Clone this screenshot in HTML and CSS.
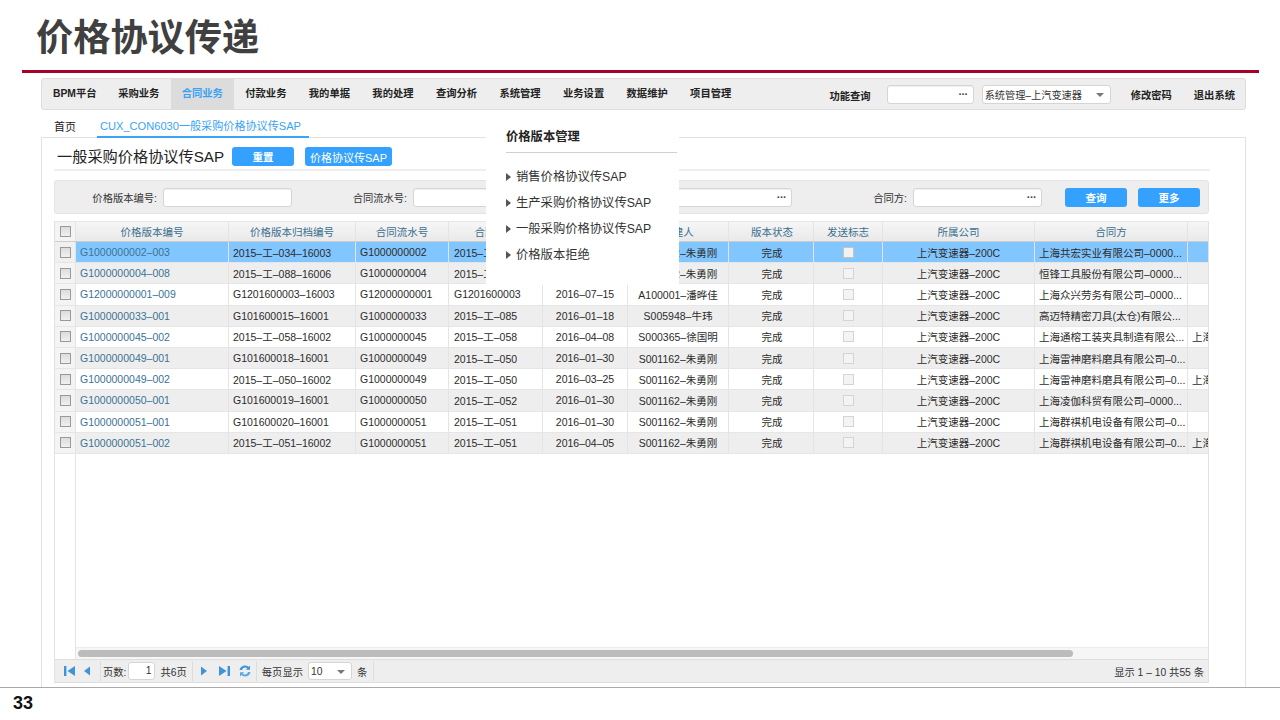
FILE: index.html
```html
<!DOCTYPE html>
<html lang="zh">
<head>
<meta charset="utf-8">
<title>价格协议传递</title>
<link rel="stylesheet" href="styles.css">
</head>
<body>
<div class="slide">
  <header class="slide-head"><h1>价格协议传递</h1></header>
  <div class="rule"></div>
  <main class="stage">
    <nav class="topnav">
      <span class="nav-item first">BPM平台</span>
      <span class="nav-item">采购业务</span>
      <span class="nav-item active">合同业务</span>
      <span class="nav-item">付款业务</span>
      <span class="nav-item">我的单据</span>
      <span class="nav-item">我的处理</span>
      <span class="nav-item">查询分析</span>
      <span class="nav-item">系统管理</span>
      <span class="nav-item">业务设置</span>
      <span class="nav-item">数据维护</span>
      <span class="nav-item">项目管理</span>
      <span class="nav-spacer"></span>
      <span class="nav-label">功能查询</span>
      <span class="lookup nav-lookup"><i>...</i></span>
      <span class="select nav-select">系统管理–上汽变速器<b class="caret"></b></span>
      <span class="nav-link">修改密码</span>
      <span class="nav-link">退出系统</span>
    </nav>
    <div class="tabs">
      <span class="tab-home">首页</span>
      <span class="tab-on">CUX_CON6030一般采购价格协议传SAP</span>
    </div>
    <section class="panel">
      <div class="panel-head">
        <h2>一般采购价格协议传SAP</h2>
        <span class="btn btn-reset">重置</span>
        <span class="btn btn-send">价格协议传SAP</span>
      </div>
      <form class="filter">
        <span class="field"><label>价格版本编号:</label><span class="lookup"></span></span>
        <span class="field"><label>合同流水号:</label><span class="lookup"></span></span>
        <span class="field"><label>合同编号:</label><span class="lookup"><i>...</i></span></span>
        <span class="field"><label>合同方:</label><span class="lookup"><i>...</i></span></span>
        <span class="btn btn-query">查询</span>
        <span class="btn btn-more">更多</span>
      </form>
      <div class="grid">
        <div class="row header">
          <span class="c gut"><b class="cb"></b></span>
          <span class="c">价格版本编号</span><span class="c">价格版本归档编号</span><span class="c">合同流水号</span><span class="c">合同编号</span><span class="c">生效日期</span><span class="c">创建人</span><span class="c">版本状态</span><span class="c">发送标志</span><span class="c">所属公司</span><span class="c">合同方</span><span class="c"></span>
        </div>
        <div class="row selected"><span class="c gut"><b class="cb"></b></span><span class="c l link">G1000000002–003</span><span class="c l">2015–工–034–16003</span><span class="c l">G1000000002</span><span class="c l">2015–工–034</span><span class="c">2016–04–05</span><span class="c">S001162–朱勇刚</span><span class="c">完成</span><span class="c"><b class="cb"></b></span><span class="c">上汽变速器–200C</span><span class="c l">上海共宏实业有限公司–0000...</span><span class="c l"></span></div>
        <div class="row alt"><span class="c gut"><b class="cb"></b></span><span class="c l link">G1000000004–008</span><span class="c l">2015–工–088–16006</span><span class="c l">G1000000004</span><span class="c l">2015–工–088</span><span class="c">2016–04–05</span><span class="c">S001162–朱勇刚</span><span class="c">完成</span><span class="c"><b class="cb"></b></span><span class="c">上汽变速器–200C</span><span class="c l">恒锋工具股份有限公司–0000...</span><span class="c l"></span></div>
        <div class="row"><span class="c gut"><b class="cb"></b></span><span class="c l link">G12000000001–009</span><span class="c l">G1201600003–16003</span><span class="c l">G12000000001</span><span class="c l">G1201600003</span><span class="c">2016–07–15</span><span class="c">A100001–潘晔佳</span><span class="c">完成</span><span class="c"><b class="cb"></b></span><span class="c">上汽变速器–200C</span><span class="c l">上海众兴劳务有限公司–0000...</span><span class="c l"></span></div>
        <div class="row alt"><span class="c gut"><b class="cb"></b></span><span class="c l link">G1000000033–001</span><span class="c l">G101600015–16001</span><span class="c l">G1000000033</span><span class="c l">2015–工–085</span><span class="c">2016–01–18</span><span class="c">S005948–牛玮</span><span class="c">完成</span><span class="c"><b class="cb"></b></span><span class="c">上汽变速器–200C</span><span class="c l">高迈特精密刀具(太仓)有限公...</span><span class="c l"></span></div>
        <div class="row"><span class="c gut"><b class="cb"></b></span><span class="c l link">G1000000045–002</span><span class="c l">2015–工–058–16002</span><span class="c l">G1000000045</span><span class="c l">2015–工–058</span><span class="c">2016–04–08</span><span class="c">S000365–徐国明</span><span class="c">完成</span><span class="c"><b class="cb"></b></span><span class="c">上汽变速器–200C</span><span class="c l">上海通榕工装夹具制造有限公...</span><span class="c l">上海</span></div>
        <div class="row alt"><span class="c gut"><b class="cb"></b></span><span class="c l link">G1000000049–001</span><span class="c l">G101600018–16001</span><span class="c l">G1000000049</span><span class="c l">2015–工–050</span><span class="c">2016–01–30</span><span class="c">S001162–朱勇刚</span><span class="c">完成</span><span class="c"><b class="cb"></b></span><span class="c">上汽变速器–200C</span><span class="c l">上海雷神磨料磨具有限公司–0...</span><span class="c l"></span></div>
        <div class="row"><span class="c gut"><b class="cb"></b></span><span class="c l link">G1000000049–002</span><span class="c l">2015–工–050–16002</span><span class="c l">G1000000049</span><span class="c l">2015–工–050</span><span class="c">2016–03–25</span><span class="c">S001162–朱勇刚</span><span class="c">完成</span><span class="c"><b class="cb"></b></span><span class="c">上汽变速器–200C</span><span class="c l">上海雷神磨料磨具有限公司–0...</span><span class="c l">上海</span></div>
        <div class="row alt"><span class="c gut"><b class="cb"></b></span><span class="c l link">G1000000050–001</span><span class="c l">G101600019–16001</span><span class="c l">G1000000050</span><span class="c l">2015–工–052</span><span class="c">2016–01–30</span><span class="c">S001162–朱勇刚</span><span class="c">完成</span><span class="c"><b class="cb"></b></span><span class="c">上汽变速器–200C</span><span class="c l">上海凌伽科贸有限公司–0000...</span><span class="c l"></span></div>
        <div class="row"><span class="c gut"><b class="cb"></b></span><span class="c l link">G1000000051–001</span><span class="c l">G101600020–16001</span><span class="c l">G1000000051</span><span class="c l">2015–工–051</span><span class="c">2016–01–30</span><span class="c">S001162–朱勇刚</span><span class="c">完成</span><span class="c"><b class="cb"></b></span><span class="c">上汽变速器–200C</span><span class="c l">上海群祺机电设备有限公司–0...</span><span class="c l"></span></div>
        <div class="row alt"><span class="c gut"><b class="cb"></b></span><span class="c l link">G1000000051–002</span><span class="c l">2015–工–051–16002</span><span class="c l">G1000000051</span><span class="c l">2015–工–051</span><span class="c">2016–04–05</span><span class="c">S001162–朱勇刚</span><span class="c">完成</span><span class="c"><b class="cb"></b></span><span class="c">上汽变速器–200C</span><span class="c l">上海群祺机电设备有限公司–0...</span><span class="c l">上海</span></div>
        <div class="grid-fill"><span class="fill-gut"></span></div>
        <div class="scroll-wrap">
          <span class="fill-gut"></span>
          <div class="scrollbar"><span class="thumb"></span></div>
        </div>
        <div class="pager">
          <svg class="pg pg-first" width="14" height="12" viewBox="0 0 14 12"><rect x="1" y="1" width="2.4" height="10" fill="#3f93d8"/><path d="M12 1v10L4.5 6z" fill="#3f93d8"/></svg>
          <svg class="pg pg-prev" width="8" height="12" viewBox="0 0 8 12"><path d="M7 1.5v9L1 6z" fill="#3f93d8"/></svg>
          <span class="sep sep-a"></span>
          <span class="pg-text">页数:</span>
          <span class="pg-input">1</span>
          <span class="pg-text">共6页</span>
          <span class="sep sep-b"></span>
          <svg class="pg pg-fwd" width="8" height="12" viewBox="0 0 8 12"><path d="M1 1.5v9L7 6z" fill="#3f93d8"/></svg>
          <svg class="pg pg-last" width="14" height="12" viewBox="0 0 14 12"><path d="M2 1v10L9.5 6z" fill="#3f93d8"/><rect x="10.6" y="1" width="2.4" height="10" fill="#3f93d8"/></svg>
          <svg class="pg pg-ref" width="14" height="14" viewBox="0 0 14 14"><path d="M1.5 6C2 3 4.500 1.500 7 1.500c1.500 0 2.700.6 3.500 1.400L12 1.500v4.300H7.800l1.500-1.500C8.700 3.800 7.900 3.500 7 3.500 5.500 3.500 4.500 4.500 4 6z" fill="#3f93d8"/><path d="M12.500 8C12 11 9.500 12.500 7 12.500c-1.500 0-2.700-.6-3.500-1.400L2 12.500V8.200h4.200l-1.500 1.500c.6.500 1.400.8 2.300.8 1.500 0 2.500-1 3-2.500z" fill="#5aa9e6"/></svg>
          <span class="sep sep-c"></span>
          <span class="pg-text">每页显示</span>
          <span class="select pg-select">10<b class="caret"></b></span>
          <span class="pg-text">条</span>
          <span class="sep sep-d"></span>
          <span class="nav-spacer"></span>
          <span class="pg-text pg-total">显示 1 – 10 共55 条</span>
        </div>
      </div>
    </section>
    <aside class="popmenu">
      <h3>价格版本管理</h3>
      <ul>
        <li>销售价格协议传SAP</li>
        <li>生产采购价格协议传SAP</li>
        <li>一般采购价格协议传SAP</li>
        <li>价格版本拒绝</li>
      </ul>
    </aside>
  </main>
  <footer class="slide-foot"><span>33</span></footer>
</div>
</body>
</html>
```
FILE: styles.css
```css
* { box-sizing: border-box; }
html, body { margin: 0; padding: 0; background: #fff; }
body { font-family: "Liberation Sans", "Noto Sans CJK SC", sans-serif; color: #222; }
.slide { width: 1280px; height: 720px; display: flex; flex-direction: column; overflow: hidden; }
.slide-head { height: 70px; padding: 13px 0 0 36px; flex: none; }
.slide-head h1 { margin: 0; font-size: 37.2px; line-height: 44px; font-weight: 700; color: #404040; font-family: "Noto Sans CJK SC", sans-serif; }
.rule { height: 3px; margin: 0 21px 0 22px; background: #a8002a; flex: none; }
.stage { position: relative; height: 614px; flex: none; padding: 5px 34px 0 41px; overflow: hidden; }

.topnav { height: 32px; display: flex; align-items: center; background: #eee; border: 1px solid #ddd; border-radius: 3px; width: 1205px; font-size: 10.3px; font-weight: 700; color: #222; }
.nav-item { height: 30px; line-height: 30px; width: 63.55px; white-space: nowrap; text-align: center; flex: none; }
.nav-item.first { width: 65px; padding: 0 0 0 11px; text-align: left; }
.nav-item.active { background: #dcdcdc; color: #3aa3f5; }
.nav-spacer { flex: 1; }
.nav-label { margin-right: 16px; padding-top: 2px; }
.lookup { display: flex; align-items: center; justify-content: flex-end; background: #fff; border: 1px solid #d5d5d5; border-radius: 3px; height: 19px; padding-right: 5px; box-shadow: inset 0 1px 1px #f0f0f0; }
.lookup i { font-style: normal; font-size: 11px; line-height: 11px; font-weight: 700; color: #444; padding-bottom: 6px; }
.nav-lookup { width: 87px; margin-right: 8px; }
.select { position: relative; display: flex; align-items: center; background: #fff; border: 1px solid #d5d5d5; border-radius: 3px; height: 19px; padding-left: 2px; font-weight: 400; color: #333; }
.nav-select { width: 129px; margin-right: 20px; font-size: 10.2px; }
.caret { position: absolute; right: 6px; top: 7px; width: 0; height: 0; border: 4px solid transparent; border-top: 4px solid #777; border-bottom: 0; }
.nav-link { margin-right: 22px; }
.nav-link:last-child { margin-right: 10px; }

.tabs { height: 27px; display: flex; align-items: flex-end; padding-left: 13px; font-size: 11px; }
.tab-home { padding-bottom: 3px; line-height: 14px; width: 43px; color: #222; }
.tab-on { line-height: 14px; padding: 0 8px 3px 3px; color: #3aa3f5; border-bottom: 2px solid #3aa3f5; width: 212px; white-space: nowrap; margin-bottom: -1px; position: relative; font-size: 11.1px; }

.panel { width: 1205px; height: 560px; border: 1px solid #e2e2e2; border-bottom: 0; padding: 0 35px 0 12px; }
.panel-head { height: 33px; display: flex; align-items: center; border-bottom: 2px solid #eee; padding: 6px 0 0 3px; width: 1156px; }
.panel-head h2 { margin: 0; font-size: 15.2px; line-height: 20px; font-weight: 400; color: #222; white-space: nowrap; width: 175px; }
.btn { display: inline-flex; align-items: center; justify-content: center; height: 19px; background: #33a1fd; color: #fff; border-radius: 3px; font-size: 10.5px; font-weight: 700; white-space: nowrap; flex: none; }
.btn-reset { width: 62px; margin-right: 11px; }
.btn-send { width: 87px; font-weight: 400; font-size: 11px; }

.filter { display: flex; align-items: center; width: 1155px; height: 34px; margin-top: 9px; background: #eee; border: 1px solid #e3e3e3; border-radius: 3px; font-size: 10.3px; }
.field { display: flex; align-items: center; width: 250px; flex: none; }
.field:first-child { width: 249px; }
.field label { width: 103px; text-align: right; margin-right: 6px; color: #333; white-space: nowrap; }
.field:first-child label { width: 102px; }
.field .lookup { width: 129px; }
.btn-query { width: 62px; margin-left: 11px; margin-right: 11px; }
.btn-more { width: 62px; }

.grid { width: 1155px; height: 462px; margin-top: 7px; display: flex; flex-direction: column; font-size: 10.5px; border-right: 1px solid #e2e2e2; border-left: 1px solid #e2e2e2; }
.row { display: grid; grid-template-columns: 21px 153px 127px 93px 94px 85px 101px 85px 69px 152px 153px 1fr; height: 21.2px; flex: none; background: #fff; border-bottom: 1px solid #e6e6e6; overflow: hidden; }
.c { display: flex; align-items: center; justify-content: center; white-space: nowrap; overflow: hidden; border-right: 1px solid #e4e4e4; color: #2b2b2b; }
.c:last-child { border-right: 0; }
.c:nth-child(8) { padding-left: 2px; }
.c.l { justify-content: flex-start; padding-left: 4px; }
.c.l:nth-child(5) { padding-left: 5px; }
.c.link { color: #3b7395; }
.c.gut { background: #f4f4f4; }
.row.header { height: 21px; background: linear-gradient(#f6f6f6, #e9e9e9); border-top: 1px solid #e6e6e6; border-bottom: 1px solid #ccc; }
.row.header .c { color: #3b6f8f; }
.row.alt { background: #eee; }
.row.selected { background: #82c6ff; }
.row.selected .c.gut { background: #f0f0f0; }
.cb { display: block; width: 11px; height: 11px; border: 1px solid #c4c4c4; background: linear-gradient(#f7f7f7, #e6e6e6); }
.row.selected .c:not(.gut) .cb { background: #f2f2f2; }
.row:not(.header):not(.selected) .c:not(.gut) .cb { background: #f4f4f4; border-color: #d4d4d4; }
.gut .cb { border-color: #999; background: linear-gradient(#dcdcdc, #f0f0f0); }
.grid-fill { flex: 1; display: flex; }
.fill-gut { width: 21px; flex: none; background: #fff; border-right: 1px solid #e4e4e4; }
.scroll-wrap { height: 12px; display: flex; flex: none; }
.scrollbar { flex: 1; background: #f6f6f6; border-top: 1px solid #ececec; padding: 2px 0 0 2px; }
.thumb { display: block; width: 995px; height: 7px; border-radius: 4px; background: #bcbcbc; }
.pager { height: 24px; flex: none; display: flex; align-items: center; background: #eee; border-top: 1px solid #ddd; border-bottom: 1px solid #ddd; padding-left: 8px; font-size: 10.3px; color: #333; }
.pg { flex: none; }
.pg-prev { margin-left: 6px; margin-right: 9px; }
.sep { width: 1px; height: 20px; background: #ddd; flex: none; }
.sep-a { margin-right: 2px; }
.sep-b { margin-left: 5px; margin-right: 7px; }
.sep-c { margin-left: 4px; margin-right: 5px; }
.sep-d { margin-left: 6px; }
.pg-text { white-space: nowrap; }
.pg-input { width: 27px; height: 18px; margin: 0 5px 0 2px; background: #fff; border: 1px solid #d5d5d5; border-radius: 3px; text-align: right; padding-right: 3px; line-height: 16px; }
.pg-last { margin-left: 9px; }
.pg-ref { margin-left: 7px; }
.pg-select { width: 44px; height: 18px; margin: 0 5px; font-size: 10.3px; }
.pg-total { margin-right: 4px; }

.popmenu { position: absolute; left: 486px; top: 47px; width: 193px; height: 165px; background: #fff; padding: 0 2px 0 20px; color: #333; }
.popmenu h3 { margin: 0; height: 33px; line-height: 35px; font-size: 12.3px; font-weight: 700; color: #222; border-bottom: 1px solid #d0d0d0; }
.popmenu ul { list-style: none; margin: 11px 0 0; padding: 0; }
.popmenu li { position: relative; height: 26px; line-height: 26px; font-size: 12.3px; padding-left: 10px; white-space: nowrap; color: #333; }
.popmenu li::before { content: ""; position: absolute; left: 0; top: 9px; border-left: 5px solid #555; border-top: 4px solid transparent; border-bottom: 4px solid transparent; }

.slide-foot { height: 33px; flex: none; border-top: 1px solid #aaa; padding-left: 13px; background: #fff; }
.slide-foot span { display: block; font-size: 18px; line-height: 31px; font-weight: 700; color: #111; }
```
